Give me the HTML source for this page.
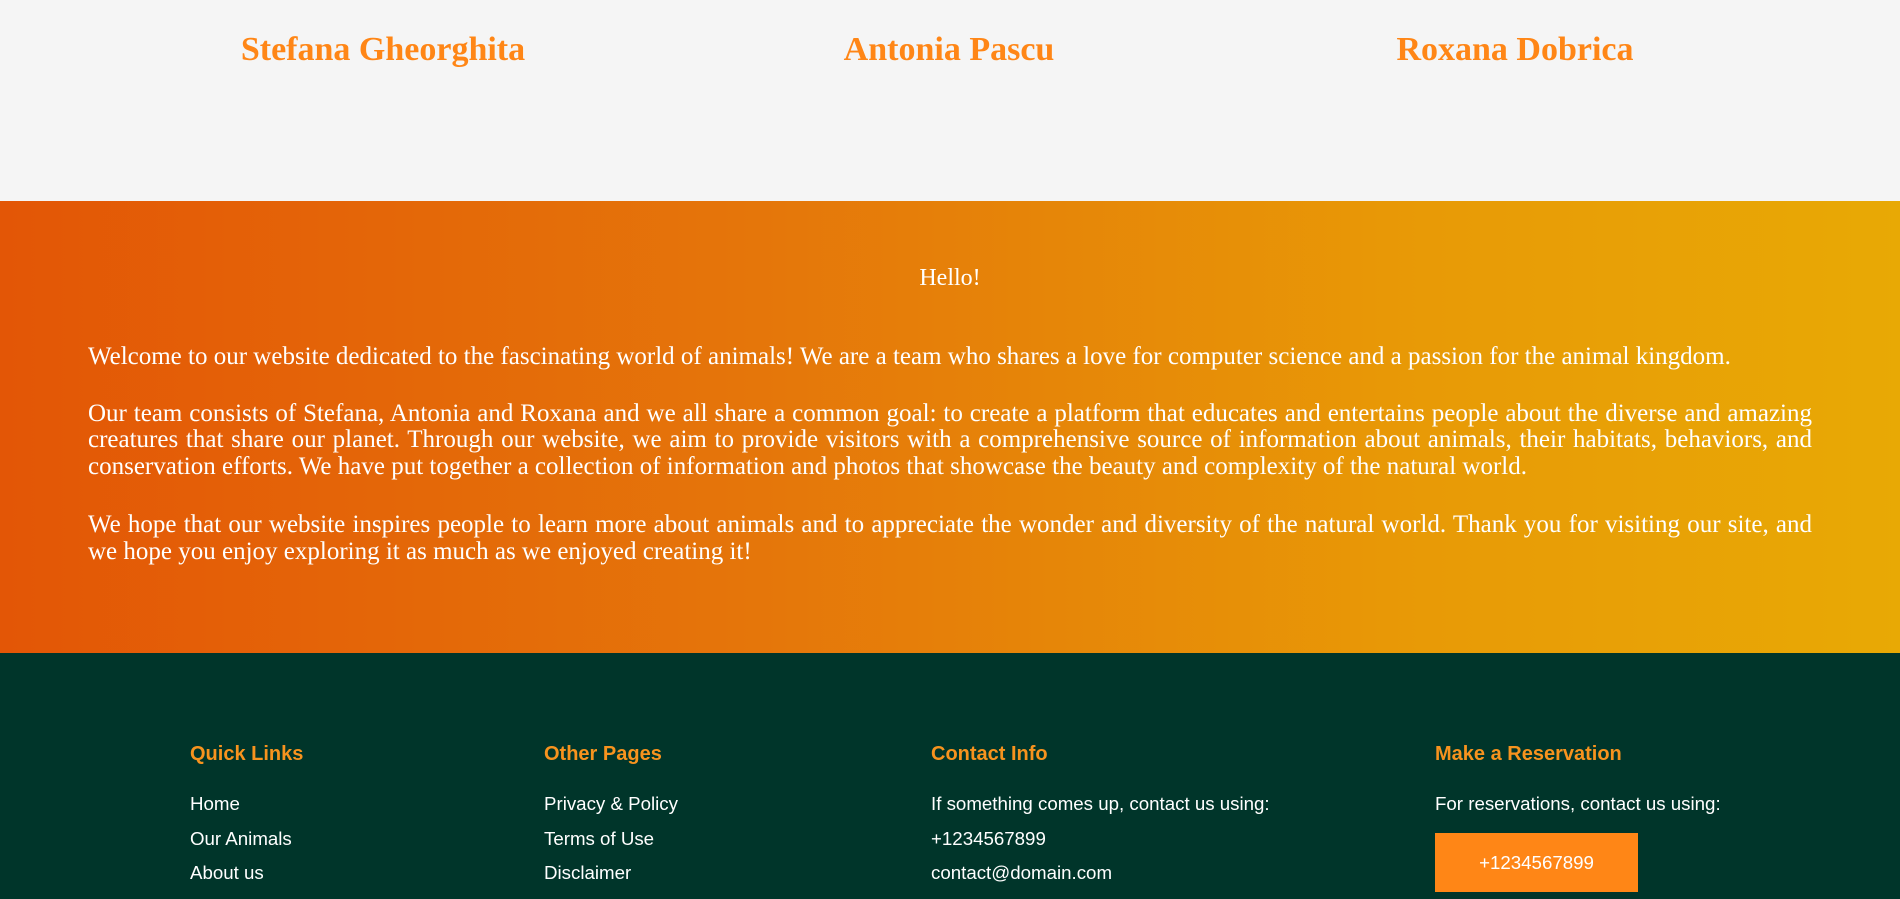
<!DOCTYPE html>
<html><head><meta charset="utf-8"><style>
*{margin:0;padding:0;box-sizing:border-box}
html,body{width:1900px;height:899px;overflow:hidden;background:#f5f5f5}
.team{height:201px;background:#f5f5f5;position:relative}
.team h2{position:absolute;top:31px;width:566px;text-align:center;font:bold 34px "Liberation Serif",serif;color:#ff8616}
.about{height:452px;background:linear-gradient(90deg,#e35606 0%,#e5760a 40%,#e89a06 75%,#e8a905 100%);color:#fff;font-family:"Liberation Serif",serif;padding:0 88px}
.hello{text-align:center;font-size:24px;padding-top:64px;height:143px}
.about p{font-size:25px;line-height:26.7px;text-align:justify;margin-bottom:30px}
.about p.p2{margin-bottom:31px}
footer{background:#00352a;height:246px;position:relative;font-family:"Liberation Sans",sans-serif;color:#fff}
.col{position:absolute;top:90px}
.col h4{font-size:20px;color:#f7931e;font-weight:bold;margin-bottom:22px;line-height:22px}
.col div{font-size:18.7px;line-height:34.5px}
.col .btn{position:absolute;left:0;top:90px;width:203px;height:59px;background:#ff8616;font-size:18.7px;text-align:center;line-height:59px}
</style></head><body>
<div class="team">
<h2 style="left:100px">Stefana Gheorghita</h2>
<h2 style="left:666px">Antonia Pascu</h2>
<h2 style="left:1232px">Roxana Dobrica</h2>
</div>
<div class="about">
<div class="hello">Hello!</div>
<p>Welcome to our website dedicated to the fascinating world of animals! We are a team who shares a love for computer science and a passion for the animal kingdom.</p>
<p class="p2">Our team consists of Stefana, Antonia and Roxana and we all share a common goal: to create a platform that educates and entertains people about the diverse and amazing creatures that share our planet. Through our website, we aim to provide visitors with a comprehensive source of information about animals, their habitats, behaviors, and conservation efforts. We have put together a collection of information and photos that showcase the beauty and complexity of the natural world.</p>
<p>We hope that our website inspires people to learn more about animals and to appreciate the wonder and diversity of the natural world. Thank you for visiting our site, and we hope you enjoy exploring it as much as we enjoyed creating it!</p>
</div>
<footer>
<div class="col" style="left:190px"><h4>Quick Links</h4><div>Home</div><div>Our Animals</div><div>About us</div><div>Contact</div></div>
<div class="col" style="left:544px"><h4>Other Pages</h4><div>Privacy &amp; Policy</div><div>Terms of Use</div><div>Disclaimer</div><div>FAQ</div></div>
<div class="col" style="left:931px"><h4>Contact Info</h4><div>If something comes up, contact us using:</div><div>+1234567899</div><div>contact@domain.com</div></div>
<div class="col" style="left:1435px"><h4>Make a Reservation</h4><div>For reservations, contact us using:</div><div class="btn">+1234567899</div></div>
</footer>
</body></html>
